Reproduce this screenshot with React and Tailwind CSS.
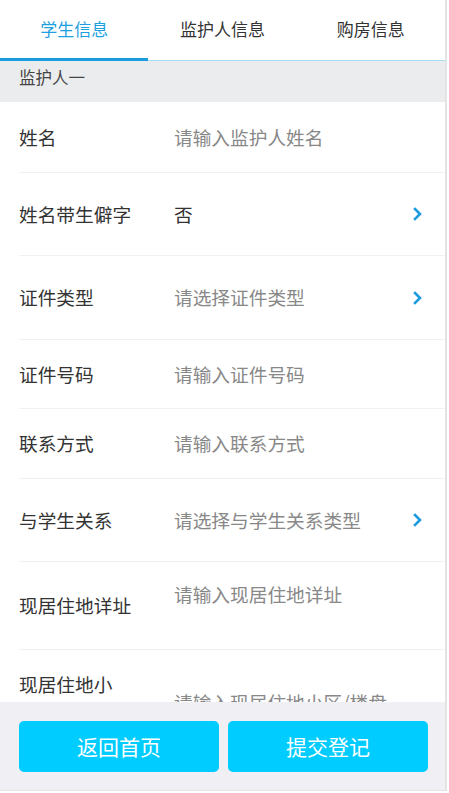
import React, { useState } from 'react';

const font = { fontFamily: '"Noto Sans CJK SC", "Noto Sans", sans-serif' };

const rows = [
  { label: '姓名', value: '请输入监护人姓名', h: 'h-[70px]' },
  { label: '姓名带生僻字', value: '否', filled: true, arrow: true, h: 'h-[83px]' },
  { label: '证件类型', value: '请选择证件类型', arrow: true, h: 'h-[84px]' },
  { label: '证件号码', value: '请输入证件号码', h: 'h-[69px]' },
  { label: '联系方式', value: '请输入联系方式', h: 'h-[70px]' },
  { label: '与学生关系', value: '请选择与学生关系类型', arrow: true, h: 'h-[83px]' },
];

const Chevron = () => (
  <svg width="9" height="14" viewBox="0 0 9 14" className="shrink-0">
    <path d="M2 2 L7 7 L2 12" fill="none" stroke="#1a9be0" strokeWidth="2.6" strokeLinecap="square" />
  </svg>
);

const App = () => {
  const [tab, setTab] = useState(0);
  const tabs = ['学生信息', '监护人信息', '购房信息'];

  return (
    <div style={font} className="w-[449px] h-[793px] bg-white">
      <div className="w-[447px] h-[791px] flex flex-col border-r-2 border-b border-[#e3e3e3] overflow-hidden">
        {/* tabs */}
        <div className="flex h-[61px] border-b border-[#a6dcf5] shrink-0">
          {tabs.map((t, i) => (
            <button
              key={t}
              onClick={() => setTab(i)}
              className={`flex-1 flex items-center justify-center text-[17px] border-b-[3px] -mb-px ${
                tab === i ? 'text-[#1e9fe0] border-[#1a9be0]' : 'text-[#333] border-transparent'
              }`}
            >
              {t}
            </button>
          ))}
        </div>

        <div className="flex-1 overflow-hidden">
          <div className="h-[41px] bg-[#ebecee] px-[19px] pt-[4px] text-[16.5px] text-[#444]">监护人一</div>

          <div className="pl-[19px]">
            {rows.map((r, i) => (
              <div key={r.label} className={`flex items-center ${r.h} ${i > 0 ? 'border-t border-[#f1f1f1]' : ''}`}>
                <div className="w-[155px] text-[18.7px] text-[#333]">{r.label}</div>
                <div className={`flex-1 text-[18.7px] ${r.filled ? 'text-[#333]' : 'text-[#888]'}`}>{r.value}</div>
                {r.arrow && <div className="w-[40px] pr-[23px] flex justify-end"><Chevron /></div>}
              </div>
            ))}

            <div className="flex items-center h-[88px] border-t border-[#f1f1f1]">
              <div className="w-[155px] text-[18.7px] text-[#333]">现居住地详址</div>
              <div className="flex-1 self-start pt-[18px] text-[18.7px] text-[#888]">请输入现居住地详址</div>
            </div>

            <div className="flex h-[88px] border-t border-[#f1f1f1]">
              <div className="w-[155px] pt-[21px]">
                <div className="w-[118px] text-[18.7px] leading-[26px] text-[#333]">现居住地小区/楼盘</div>
              </div>
              <div className="flex-1 pt-[38px] text-[18.7px] text-[#888]">请输入现居住地小区/楼盘</div>
            </div>
          </div>
        </div>

        {/* bottom bar */}
        <div className="h-[88px] bg-[#efeff4] flex gap-[9px] pl-[19px] pt-[19px] shrink-0">
          <button className="w-[200px] h-[51px] rounded-[5px] bg-[#00ccff] text-white text-[21px]">返回首页</button>
          <button className="w-[200px] h-[51px] rounded-[5px] bg-[#00ccff] text-white text-[21px]">提交登记</button>
        </div>
      </div>
    </div>
  );
};

export default App;
